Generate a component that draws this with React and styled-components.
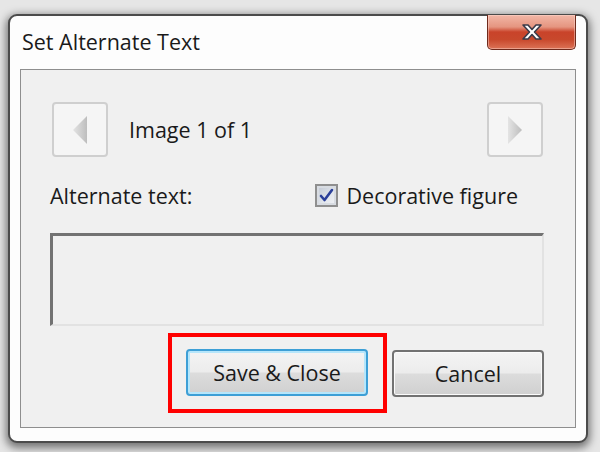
import React from "react";
import styled, { createGlobalStyle } from "styled-components";

const Global = createGlobalStyle`
  html, body { margin: 0; padding: 0; }
  body {
    width: 600px;
    height: 452px;
    overflow: hidden;
    background: #e6e6e6;
    font-family: "Open Sans", "Noto Sans", "Liberation Sans", sans-serif;
  }
`;

const Window = styled.div`
  box-sizing: border-box;
  margin: 14px 0 0 8px;
  width: 580px;
  height: 429px;
  border: 2px solid #4b4b4b;
  border-radius: 9px;
  background: #fdfdfd;
  padding: 0 10px 13px 10px;
  box-shadow: 0 3px 9px 2px rgba(0, 0, 0, 0.5);
  display: flex;
  flex-direction: column;
`;

const TitleBar = styled.div`
  height: 53px;
  display: flex;
  align-items: flex-start;
  justify-content: space-between;
`;

const Title = styled.div`
  margin: 14px 0 0 2px;
  font-size: 21.5px;
  line-height: 24px;
  color: #1a1a1a;
`;

const CloseButton = styled.div`
  box-sizing: border-box;
  margin-top: -1px;
  width: 89px;
  height: 35px;
  border: 1px solid #6e2a1c;
  border-top: none;
  border-radius: 0 0 5px 5px;
  background: linear-gradient(
    to bottom,
    #f2b7a7 0%,
    #e59580 35%,
    #c9432a 50%,
    #c8482c 72%,
    #dc7357 100%
  );
  box-shadow: inset 0 0 0 1px rgba(255, 220, 210, 0.45);
  display: flex;
  align-items: center;
  justify-content: center;
`;

const Panel = styled.div`
  flex: 1;
  box-sizing: border-box;
  border: 1px solid #8e8e8e;
  background: #f0f0f0;
  padding: 32px 31px 14px 29px;
  display: flex;
  flex-direction: column;
`;

const NavRow = styled.div`
  display: flex;
  align-items: center;
  height: 55px;
`;

const NavButton = styled.div`
  box-sizing: border-box;
  width: 56px;
  height: 55px;
  border: 2px solid #cfcfcf;
  border-radius: 4px;
  background: #f5f5f5;
  display: flex;
  align-items: center;
  justify-content: center;
  margin-left: ${(p) => (p.$right ? "auto" : "2px")};
  margin-right: ${(p) => (p.$right ? "1px" : "0")};
`;

const Counter = styled.div`
  margin-left: 21px;
  font-size: 21.5px;
  color: #1a1a1a;
`;

const LabelRow = styled.div`
  margin-top: 26px;
  height: 24px;
  display: flex;
  align-items: center;
`;

const Label = styled.div`
  font-size: 21.5px;
  color: #1a1a1a;
`;

const CheckGroup = styled.label`
  margin-left: auto;
  margin-right: 26px;
  display: flex;
  align-items: center;
  gap: 8px;
  font-size: 21.5px;
  color: #1a1a1a;
`;

const CheckBox = styled.span`
  box-sizing: border-box;
  width: 23px;
  height: 23px;
  border: 2px solid #8f8f8f;
  background: linear-gradient(135deg, #bfc6d2 0%, #e2e6ec 60%, #f2f3f6 100%);
  box-shadow: inset 0 0 0 2px #d8dce2;
  display: flex;
  align-items: center;
  justify-content: center;
`;

const TextArea = styled.div`
  margin-top: 26px;
  box-sizing: border-box;
  height: 93px;
  border-top: 3px solid #727272;
  border-left: 3px solid #727272;
  border-right: 2px solid #e2e2e2;
  border-bottom: 2px solid #e2e2e2;
  background: #f0f0f0;
`;

const ButtonRow = styled.div`
  margin-top: 7px;
  display: flex;
  align-items: center;
  justify-content: flex-end;
  gap: 5px;
`;

const Highlight = styled.div`
  box-sizing: border-box;
  width: 219px;
  height: 80px;
  border: 4px solid #ff0000;
  padding: 12px 15px 13px 14px;
`;

const Button = styled.div`
  box-sizing: border-box;
  width: ${(p) => p.$w}px;
  height: 47px;
  border: 2px solid ${(p) => (p.$focus ? "#3d9fd6" : "#727272")};
  border-radius: 4px;
  background: linear-gradient(
    to bottom,
    #f4f4f4 0%,
    #ececec 48%,
    #dcdcdc 52%,
    #d0d0d0 100%
  );
  box-shadow: ${(p) =>
    p.$focus
      ? "inset 0 0 0 2px #b6e6fb"
      : "inset 0 0 0 1px #fbfbfb"};
  display: flex;
  align-items: center;
  justify-content: center;
  font-size: 21.5px;
  color: #1a1a1a;
`;

const Arrow = ({ dir }) => (
  <svg width="18" height="30" viewBox="0 0 18 30">
    <defs>
      <linearGradient id={`g-${dir}`} x1="0" y1="0" x2="1" y2="0">
        <stop offset="0" stopColor="#e4e4e4" />
        <stop offset="1" stopColor="#bdbdbd" />
      </linearGradient>
    </defs>
    {dir === "left" ? (
      <polygon points="16,1 16,29 2,15" fill={`url(#g-${dir})`} />
    ) : (
      <polygon points="2,1 2,29 16,15" fill={`url(#g-${dir})`} />
    )}
  </svg>
);

const CloseX = () => (
  <svg width="26" height="18" viewBox="0 0 26 18">
    <path
      d="M4 2 L9 2 L13 6.5 L17 2 L22 2 L15.5 9 L22 16 L17 16 L13 11.5 L9 16 L4 16 L10.5 9 Z"
      fill="#ffffff"
      stroke="#3b3b4a"
      strokeWidth="1.6"
      strokeLinejoin="round"
    />
  </svg>
);

const Check = () => (
  <svg width="15" height="15" viewBox="0 0 15 15">
    <path
      d="M2 8 L5.5 12 L13 2"
      fill="none"
      stroke="#2a3f9a"
      strokeWidth="2.6"
      strokeLinecap="round"
      strokeLinejoin="round"
    />
  </svg>
);

export default function App() {
  return (
    <>
      <Global />
      <Window>
        <TitleBar>
          <Title>Set Alternate Text</Title>
          <CloseButton>
            <CloseX />
          </CloseButton>
        </TitleBar>
        <Panel>
          <NavRow>
            <NavButton>
              <Arrow dir="left" />
            </NavButton>
            <Counter>Image 1 of 1</Counter>
            <NavButton $right>
              <Arrow dir="right" />
            </NavButton>
          </NavRow>
          <LabelRow>
            <Label>Alternate text:</Label>
            <CheckGroup>
              <CheckBox>
                <Check />
              </CheckBox>
              Decorative figure
            </CheckGroup>
          </LabelRow>
          <TextArea />
          <ButtonRow>
            <Highlight>
              <Button $w={182} $focus>
                Save &amp; Close
              </Button>
            </Highlight>
            <Button $w={152}>Cancel</Button>
          </ButtonRow>
        </Panel>
      </Window>
    </>
  );
}
